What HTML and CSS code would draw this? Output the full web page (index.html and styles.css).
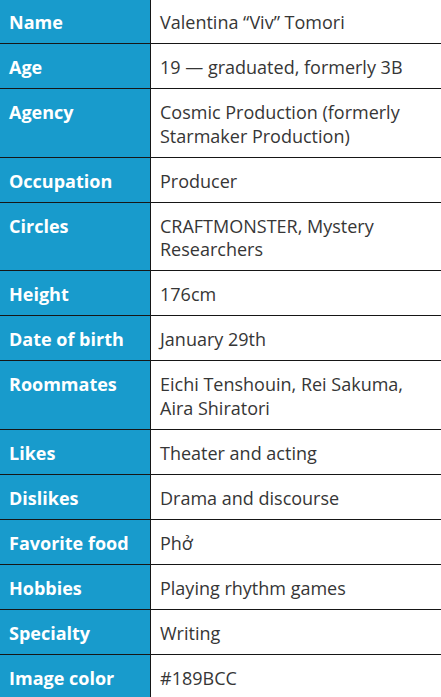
FILE: index.html
```html
<!DOCTYPE html>
<html lang="en">
<head>
<meta charset="utf-8">
<title>Profile</title>
<link rel="stylesheet" href="styles.css">
</head>
<body>
<table class="sheet">
  <tbody>
    <tr><th>Name</th><td>Valentina “Viv” Tomori</td></tr>
    <tr><th>Age</th><td>19 — graduated, formerly 3B</td></tr>
    <tr><th>Agency</th><td>Cosmic Production (formerly Starmaker Production)</td></tr>
    <tr><th>Occupation</th><td>Producer</td></tr>
    <tr><th>Circles</th><td>CRAFTMONSTER, Mystery Researchers</td></tr>
    <tr><th>Height</th><td>176cm</td></tr>
    <tr><th>Date of birth</th><td>January 29th</td></tr>
    <tr><th>Roommates</th><td>Eichi Tenshouin, Rei Sakuma, Aira Shiratori</td></tr>
    <tr><th>Likes</th><td>Theater and acting</td></tr>
    <tr><th>Dislikes</th><td>Drama and discourse</td></tr>
    <tr><th>Favorite food</th><td>Phở</td></tr>
    <tr><th>Hobbies</th><td>Playing rhythm games</td></tr>
    <tr><th>Specialty</th><td>Writing</td></tr>
    <tr><th>Image color</th><td>#189BCC</td></tr>
  </tbody>
</table>
</body>
</html>
```
FILE: styles.css
```css
html, body {
  margin: 0;
  padding: 0;
  background: #ffffff;
}

body {
  font-family: "Open Sans", "DejaVu Sans", sans-serif;
  font-size: 18px;
  line-height: 23.9px;
}

.sheet {
  width: 441px;
  margin-top: -2px;
  border-collapse: collapse;
  table-layout: fixed;
}

.sheet th,
.sheet td {
  border-top: 1px solid #161616;
  border-bottom: 1px solid #161616;
  padding: 12px 9px 8px 9px;
  vertical-align: top;
  text-align: left;
}

.sheet th {
  width: 132px;
  background: #189bcc;
  color: #ffffff;
  font-weight: 700;
  border-right: 1px solid #161616;
}

.sheet td {
  color: #363636;
  font-weight: 400;
  padding-left: 9px;
  padding-right: 6px;
}
```
